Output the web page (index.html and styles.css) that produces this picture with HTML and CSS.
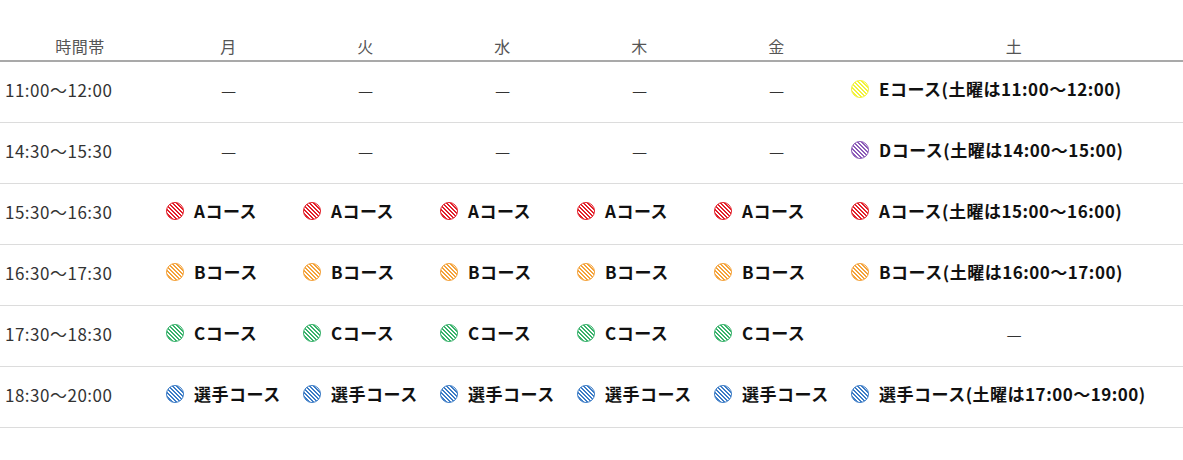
FILE: index.html
```html
<!DOCTYPE html>
<html lang="ja">
<head>
<meta charset="utf-8">
<link rel="stylesheet" href="styles.css">
</head>
<body>
<table class="schedule">
  <thead>
    <tr>
      <th class="time-col">時間帯</th>
      <th>月</th><th>火</th><th>水</th><th>木</th><th>金</th><th class="sat-col">土</th>
    </tr>
  </thead>
  <tbody>
    <tr>
      <td class="time">11:00〜12:00</td>
      <td class="none">—</td><td class="none">—</td><td class="none">—</td><td class="none">—</td><td class="none">—</td>
      <td><span class="course"><i class="dot e"></i>Eコース(土曜は11:00〜12:00)</span></td>
    </tr>
    <tr>
      <td class="time">14:30〜15:30</td>
      <td class="none">—</td><td class="none">—</td><td class="none">—</td><td class="none">—</td><td class="none">—</td>
      <td><span class="course"><i class="dot d"></i>Dコース(土曜は14:00〜15:00)</span></td>
    </tr>
    <tr>
      <td class="time">15:30〜16:30</td>
      <td><span class="course"><i class="dot a"></i>Aコース</span></td>
      <td><span class="course"><i class="dot a"></i>Aコース</span></td>
      <td><span class="course"><i class="dot a"></i>Aコース</span></td>
      <td><span class="course"><i class="dot a"></i>Aコース</span></td>
      <td><span class="course"><i class="dot a"></i>Aコース</span></td>
      <td><span class="course"><i class="dot a"></i>Aコース(土曜は15:00〜16:00)</span></td>
    </tr>
    <tr>
      <td class="time">16:30〜17:30</td>
      <td><span class="course"><i class="dot b"></i>Bコース</span></td>
      <td><span class="course"><i class="dot b"></i>Bコース</span></td>
      <td><span class="course"><i class="dot b"></i>Bコース</span></td>
      <td><span class="course"><i class="dot b"></i>Bコース</span></td>
      <td><span class="course"><i class="dot b"></i>Bコース</span></td>
      <td><span class="course"><i class="dot b"></i>Bコース(土曜は16:00〜17:00)</span></td>
    </tr>
    <tr>
      <td class="time">17:30〜18:30</td>
      <td><span class="course"><i class="dot c"></i>Cコース</span></td>
      <td><span class="course"><i class="dot c"></i>Cコース</span></td>
      <td><span class="course"><i class="dot c"></i>Cコース</span></td>
      <td><span class="course"><i class="dot c"></i>Cコース</span></td>
      <td><span class="course"><i class="dot c"></i>Cコース</span></td>
      <td class="none">—</td>
    </tr>
    <tr>
      <td class="time">18:30〜20:00</td>
      <td><span class="course"><i class="dot s"></i>選手コース</span></td>
      <td><span class="course"><i class="dot s"></i>選手コース</span></td>
      <td><span class="course"><i class="dot s"></i>選手コース</span></td>
      <td><span class="course"><i class="dot s"></i>選手コース</span></td>
      <td><span class="course"><i class="dot s"></i>選手コース</span></td>
      <td><span class="course"><i class="dot s"></i>選手コース(土曜は17:00〜19:00)</span></td>
    </tr>
  </tbody>
</table>
</body>
</html>
```
FILE: styles.css
```css
html, body {
  margin: 0;
  padding: 0;
  background: #fff;
}
body {
  font-family: "Noto Sans CJK JP", "Noto Sans", sans-serif;
  color: #333;
  padding-top: 31px;
}
.schedule {
  width: 1183px;
  border-collapse: collapse;
  table-layout: fixed;
}
.schedule th {
  font-weight: 400;
  font-size: 16px;
  letter-spacing: 0.5px;
  color: #555;
  height: 29px;
  padding: 0;
  text-align: center;
  vertical-align: middle;
  border-bottom: 2px solid #a9a9a9;
  width: 137px;
}
.schedule th.time-col { width: 160px; }
.schedule th.sat-col { width: 338px; }
.schedule td {
  height: 55px;
  padding: 0 0 5px 6px;
  border-bottom: 1px solid #dcdcdc;
  vertical-align: middle;
  font-size: 17px;
  line-height: 24px;
  white-space: nowrap;
}
.schedule td.time {
  padding-left: 5px;
  letter-spacing: 0.5px;
  color: #333;
}
.schedule td.none {
  text-align: center;
  padding-left: 0;
  color: #333;
}
.course {
  display: inline-flex;
  align-items: center;
  gap: 10px;
  font-weight: 700;
  color: #111;
  font-size: 17px;
  letter-spacing: 0.5px;
}
.dot {
  display: block;
  flex: none;
  width: 16px;
  height: 16px;
  border-radius: 50%;
  border: 1px solid var(--c);
  background-image: linear-gradient(45deg, var(--c) 0 35%, #fff 35% 50%, var(--c) 50% 85%, #fff 85% 100%);
  background-size: 4px 4px;
}
.dot.a { --c: #e2202a; }
.dot.b { --c: #f4a23a; }
.dot.c { --c: #38b26b; }
.dot.s { --c: #3c7cc6; }
.dot.d { --c: #8c5bb8; }
.dot.e { --c: #f2f23a; }
```
